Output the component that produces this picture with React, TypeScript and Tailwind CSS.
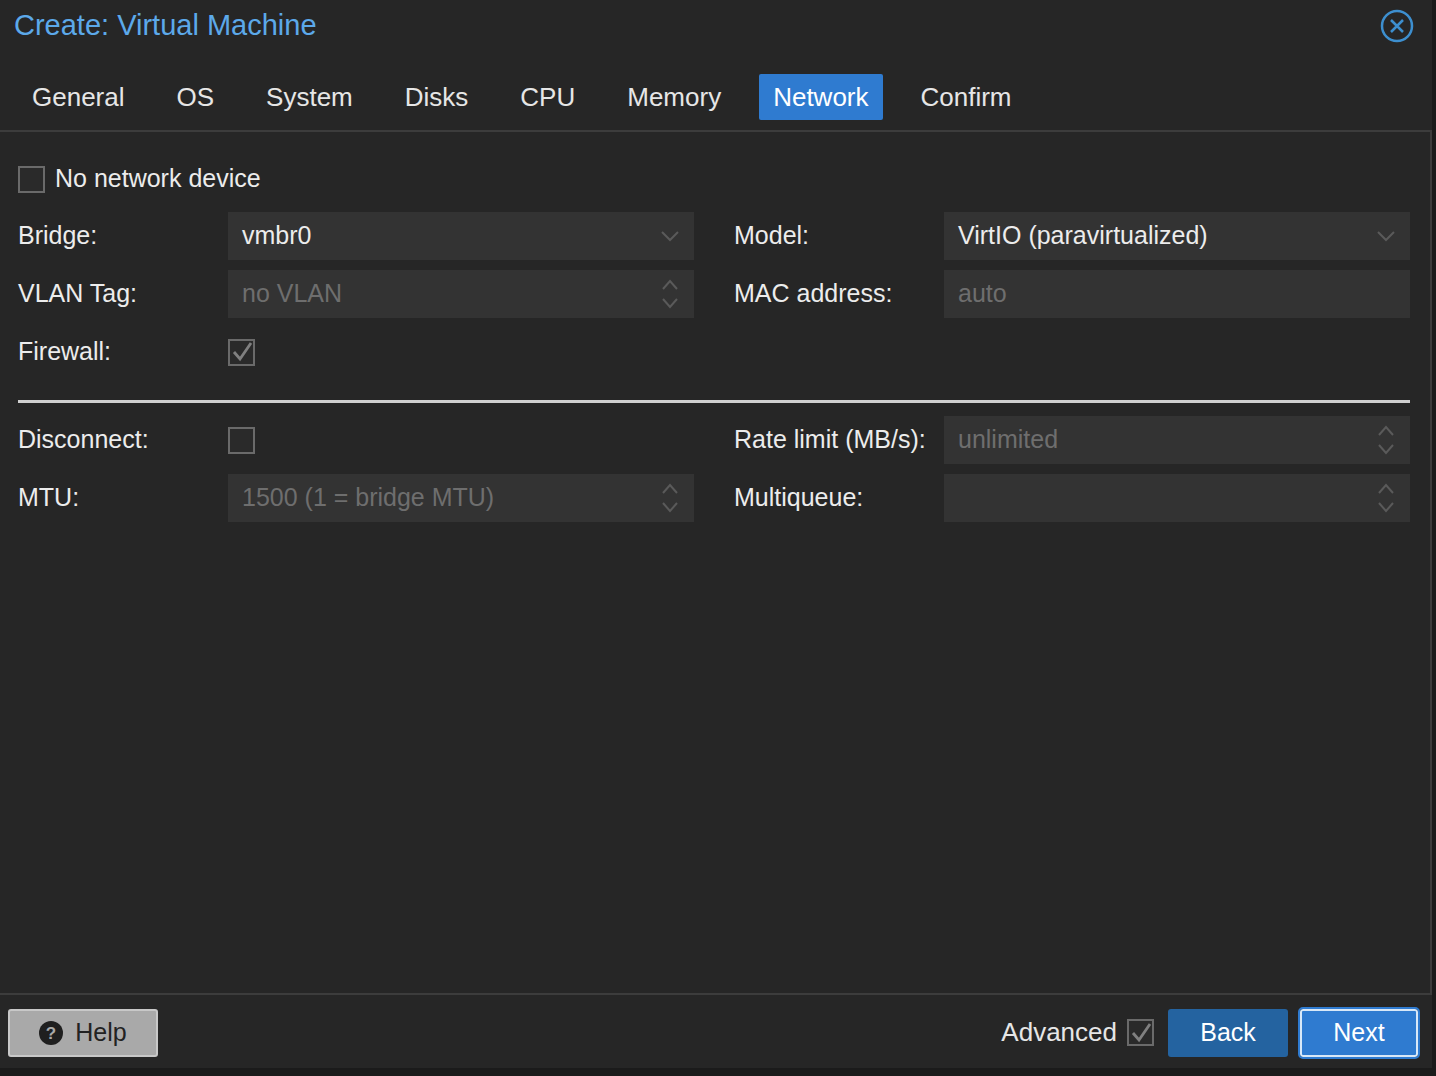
import React from "react";

const font = { fontFamily: '"Liberation Sans", Arial, sans-serif' };

function Chevron() {
  return (
    <svg width="20" height="12" viewBox="0 0 20 12" className="absolute right-[14px] top-[18px]">
      <path d="M2 2 L10 10 L18 2" stroke="#5a5a5a" strokeWidth="2" fill="none" />
    </svg>
  );
}
function Spinner() {
  return (
    <svg width="20" height="36" viewBox="0 0 20 36" className="absolute right-[14px] top-[6px]">
      <path d="M3 13 L10 5 L17 13" stroke="#5a5a5a" strokeWidth="2" fill="none" />
      <path d="M3 23 L10 31 L17 23" stroke="#5a5a5a" strokeWidth="2" fill="none" />
    </svg>
  );
}
function Field({ value, muted, kind }: { value: string; muted?: boolean; kind?: "combo" | "spin" }) {
  return (
    <div className={`relative h-[48px] w-[466px] bg-[#333333] flex items-center px-[14px] text-[25px] ${muted ? "text-[#6e6e6e]" : "text-[#ececec]"}`}>
      {value}
      {kind === "combo" && <Chevron />}
      {kind === "spin" && <Spinner />}
    </div>
  );
}
function Check({ checked }: { checked?: boolean }) {
  return (
    <div className="w-[27px] h-[27px] border-2 border-[#6a6a6a] bg-[#2a2a2a] flex items-center justify-center">
      {checked && (
        <svg width="22" height="22" viewBox="0 0 22 22">
          <path d="M3 11 L9 18 L20 2" stroke="#808080" strokeWidth="2.8" fill="none" />
        </svg>
      )}
    </div>
  );
}
function Label({ children }: { children: React.ReactNode }) {
  return <div className="w-[210px] text-[25px] text-[#ececec]">{children}</div>;
}

export default function App() {
  const tabs = ["General", "OS", "System", "Disks", "CPU", "Memory", "Network", "Confirm"];
  return (
    <div className="w-[1436px] h-[1076px] bg-[#1b1b1b] overflow-hidden" style={font}>
      <div className="w-[1432px] h-[1068px] bg-[#262626] flex flex-col">
        <div className="h-[52px] flex items-center justify-between pl-[14px] pr-[18px]">
          <div className="text-[29px] text-[#5ca9ea]">Create: Virtual Machine</div>
          <svg width="34" height="34" viewBox="0 0 34 34">
            <circle cx="17" cy="17" r="15" stroke="#3d8fcf" strokeWidth="2.5" fill="none" />
            <path d="M11 11 L23 23 M23 11 L11 23" stroke="#3d8fcf" strokeWidth="2.5" />
          </svg>
        </div>
        <div className="h-[80px] flex items-start pt-[22px] pl-[18px] gap-[14px] border-b-2 border-[#3c3c3c]">
          {tabs.map((t) => (
            <div
              key={t}
              className={`h-[46px] px-[14px] mr-[10px] flex items-center text-[26px] rounded-[2px] ${t === "Network" ? "bg-[#2f7bd0] text-white" : "text-[#e6e6e6]"}`}
            >
              {t}
            </div>
          ))}
        </div>
        <div className="flex-1 border-r-2 border-b-2 border-[#3c3c3c] px-[18px] pt-[32px] flex flex-col">
          <div className="flex items-center gap-[10px] h-[30px]">
            <Check />
            <span className="text-[25px] text-[#ececec]">No network device</span>
          </div>
          <div className="flex flex-col gap-[10px] mt-[18px]">
            <div className="flex items-center">
              <Label>Bridge:</Label>
              <Field value="vmbr0" kind="combo" />
              <div className="w-[40px]" />
              <Label>Model:</Label>
              <Field value="VirtIO (paravirtualized)" kind="combo" />
            </div>
            <div className="flex items-center">
              <Label>VLAN Tag:</Label>
              <Field value="no VLAN" muted kind="spin" />
              <div className="w-[40px]" />
              <Label>MAC address:</Label>
              <Field value="auto" muted />
            </div>
            <div className="flex items-center h-[48px]">
              <Label>Firewall:</Label>
              <Check checked />
            </div>
          </div>
          <div className="h-[3px] bg-[#d0d0d0] mt-[24px] w-[1392px]" />
          <div className="flex flex-col gap-[10px] mt-[13px]">
            <div className="flex items-center">
              <Label>Disconnect:</Label>
              <div className="w-[466px]"><Check /></div>
              <div className="w-[40px]" />
              <Label>Rate limit (MB/s):</Label>
              <Field value="unlimited" muted kind="spin" />
            </div>
            <div className="flex items-center">
              <Label>MTU:</Label>
              <Field value="1500 (1 = bridge MTU)" muted kind="spin" />
              <div className="w-[40px]" />
              <Label>Multiqueue:</Label>
              <Field value="" muted kind="spin" />
            </div>
          </div>
        </div>
        <div className="h-[73px] flex items-center px-[8px] pt-[2px]">
          <div className="h-[48px] w-[150px] bg-[#a9a9a9] border-2 border-[#c8c8c8] rounded-[3px] flex items-center justify-center gap-[12px] text-[25px] text-[#222]">
            <svg width="24" height="24" viewBox="0 0 24 24">
              <circle cx="12" cy="12" r="12" fill="#1f1f1f" />
              <text x="12" y="18" textAnchor="middle" fontSize="17" fontWeight="bold" fill="#a9a9a9" style={font}>?</text>
            </svg>
            Help
          </div>
          <div className="flex-1" />
          <span className="text-[26px] text-[#e6e6e6] mr-[10px]">Advanced</span>
          <Check checked />
          <div className="h-[48px] w-[120px] ml-[14px] bg-[#2463a0] rounded-[3px] flex items-center justify-center text-[25px] text-white">Back</div>
          <div className="h-[48px] w-[118px] ml-[12px] bg-[#2f7bd0] rounded-[3px] border-2 border-[#d8e8f8] outline-2 outline-[#2f7bd0] flex items-center justify-center text-[25px] text-white">Next</div>
          <div className="w-[6px]" />
        </div>
      </div>
    </div>
  );
}
